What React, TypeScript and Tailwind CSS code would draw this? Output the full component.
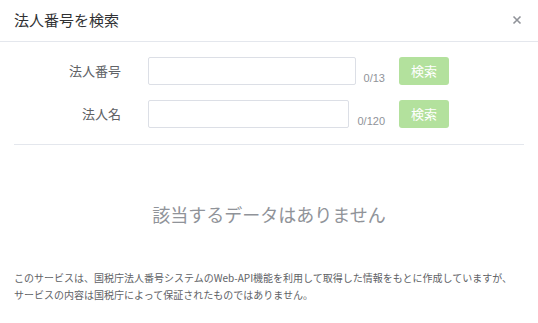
import React from "react";

const F = { fontFamily: '"Noto Sans CJK JP", "Noto Sans", sans-serif' };

function Row({ label, count }: { label: string; count: string }) {
  return (
    <div className="flex items-end h-[28px]">
      <div className="w-[121px] text-right text-[13px] text-[#606266] self-center leading-[28px]">{label}</div>
      <div className="ml-[27px] flex items-end w-[237px]">
        <div className="flex-1 h-[28px] border border-[#dcdfe6] rounded-[2px] bg-white" />
        <div className="ml-[8px] text-[11px] leading-[12px] text-[#909399] mb-[1px]" style={{ fontFamily: '"Liberation Sans", sans-serif' }}>{count}</div>
      </div>
      <button className="ml-[14px] w-[50px] h-[28px] rounded-[3px] bg-[#b3e19d] text-white text-[13px] self-center">検索</button>
    </div>
  );
}

export default function App() {
  return (
    <div className="w-[538px] h-[323px] bg-white" style={F}>
      <div className="h-[42px] flex items-center justify-between pl-[14px] pr-[16px] border-b border-[#e4e7ed]">
        <span className="text-[15px] text-[#303133] leading-none -mt-[2px]">法人番号を検索</span>
        <svg width="10" height="10" viewBox="0 0 10 10" className="-mt-[2px]">
          <path d="M1.5 1.5 L8.5 8.5 M8.5 1.5 L1.5 8.5" stroke="#909399" strokeWidth="1.6" />
        </svg>
      </div>
      <div className="pt-[15px] flex flex-col gap-[15px]">
        <Row label="法人番号" count="0/13" />
        <Row label="法人名" count="0/120" />
      </div>
      <div className="mx-[14px] mt-[16px] border-t border-[#e4e7ed]" />
      <div className="mt-[53px] h-[32px] flex items-center justify-center text-[18px] text-[#909399]">該当するデータはありません</div>
      <div className="mt-[39px] px-[14px] text-[10px] leading-[17px] text-[#606266]">
        <div>このサービスは、国税庁法人番号システムのWeb-API機能を利用して取得した情報をもとに作成していますが、</div>
        <div>サービスの内容は国税庁によって保証されたものではありません。</div>
      </div>
    </div>
  );
}
